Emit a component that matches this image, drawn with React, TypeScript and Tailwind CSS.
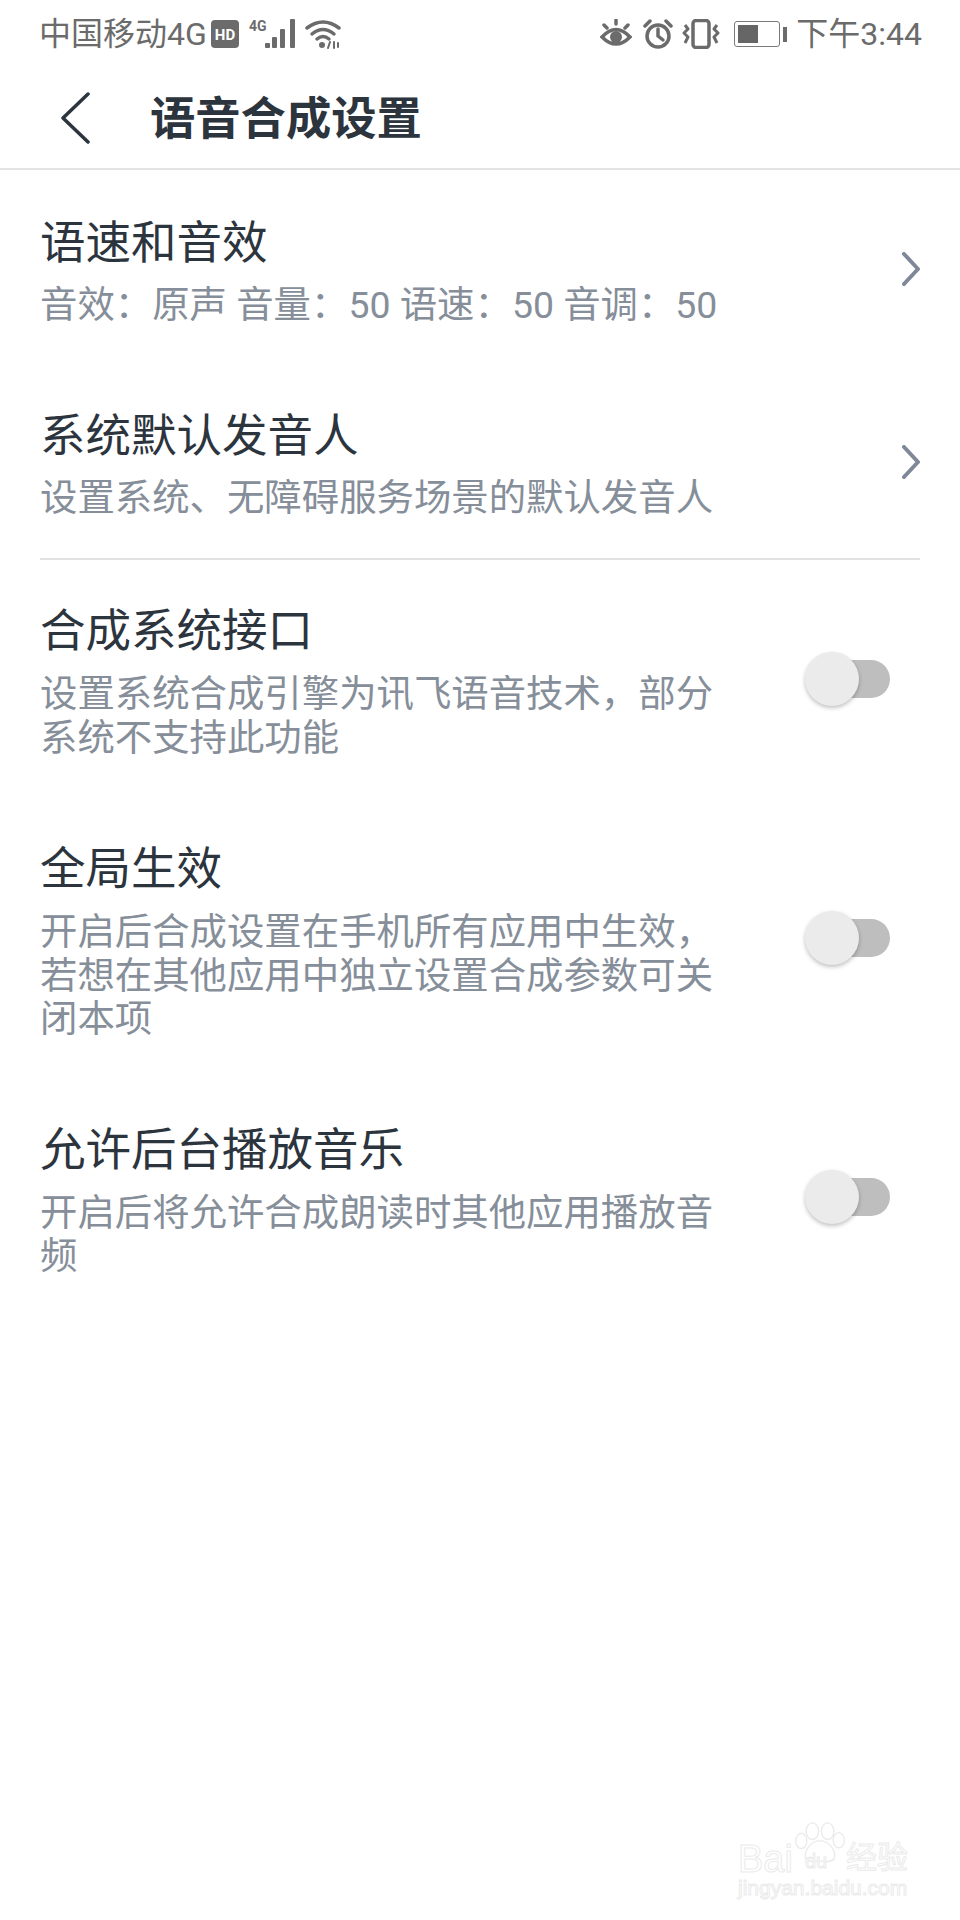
import React from 'react';

const cjk = "font-['Roboto','Noto_Sans_CJK_SC',sans-serif]";

const NavRow = ({ title, sub, className }: { title: string; sub: string; className: string }) => (
  <div className={`flex items-center justify-between pl-[40px] pr-[39px] ${className}`}>
    <div>
      <div className="text-[45.5px] leading-[58px] text-[#2c343e]">{title}</div>
      <div className="text-[37.4px] leading-[44px] mt-[10px] text-[#858e99]">{sub}</div>
    </div>
    <svg className="mb-[5px]" width="20" height="34" viewBox="0 0 20 34" fill="none" stroke="#7f8799" strokeWidth="4" strokeLinecap="round" strokeLinejoin="round">
      <path d="M3 2 L17 17 L3 32" />
    </svg>
  </div>
);

const ToggleRow = ({ title, lines, className }: { title: string; lines: string[]; className: string }) => (
  <div className={`flex items-center justify-between pl-[40px] pr-[70px] ${className}`}>
    <div>
      <div className="text-[45.5px] leading-[58px] text-[#2c343e]">{title}</div>
      <div className="mt-[12px] text-[37.4px] leading-[43.5px] text-[#858e99]">
        {lines.map((l) => (
          <div key={l}>{l}</div>
        ))}
      </div>
    </div>
    <div className="relative mb-[6px] h-[54px] w-[85px] shrink-0">
      <div className="absolute right-0 top-[8px] h-[38px] w-[60px] rounded-full bg-[#bebebe]" />
      <div className="absolute left-0 top-0 h-[54px] w-[54px] rounded-full bg-[#ebebeb] shadow-[0_2px_4px_rgba(0,0,0,0.25)]" />
    </div>
  </div>
);

export default function App() {
  return (
    <div className={`relative h-[1920px] w-[960px] overflow-hidden bg-white ${cjk}`}>
      {/* status bar */}
      <div className="flex h-[62px] items-center justify-between pl-[39px] pr-[38px] pt-[6px] text-[32px] text-[#6b6b6b]">
        <div className="flex items-center">
          <span>中国移动4G</span>
          <svg className="ml-[4px]" width="28" height="28" viewBox="0 0 28 28">
            <rect width="28" height="28" rx="4" fill="#6b6b6b" />
            <text x="14" y="20" textAnchor="middle" fontSize="15" fontWeight="700" fill="#fff" fontFamily="Roboto">HD</text>
          </svg>
          <svg className="ml-[10px]" width="48" height="30" viewBox="0 0 48 30" fill="#6b6b6b">
            <text x="0" y="12" fontSize="14" fontWeight="700" fontFamily="Roboto">4G</text>
            <rect x="16" y="24" width="5" height="5" rx="1" />
            <rect x="23" y="18" width="5" height="11" rx="1" />
            <rect x="31" y="10" width="5" height="19" rx="1" />
            <rect x="41" y="0" width="5" height="29" rx="1" />
          </svg>
          <svg className="ml-[8px]" width="36" height="30" viewBox="0 0 36 30" fill="none" stroke="#6b6b6b" strokeWidth="3.5" strokeLinecap="round">
            <path d="M2 9 Q18 -3 34 9" />
            <path d="M7 15 Q18 6 29 15" />
            <path d="M12 20 Q18 15 24 20" />
            <circle cx="17" cy="26" r="3" fill="#6b6b6b" stroke="none" />
            <path d="M25 23 L23 29 M29 23 L29 29 M33 24 L33 28" strokeWidth="2" />
          </svg>
        </div>
        <div className="flex items-center">
          <svg width="32" height="30" viewBox="0 0 32 30" fill="none" stroke="#6b6b6b" strokeWidth="3.5" strokeLinecap="round">
            <path d="M2 18 Q16 3 30 18 Q16 32 2 18 Z" />
            <circle cx="16" cy="18" r="6" fill="#6b6b6b" stroke="none" />
            <path d="M4 6 L7 9 M16 1 L16 5 M28 6 L25 9" />
          </svg>
          <svg className="ml-[11px]" width="30" height="30" viewBox="0 0 30 30" fill="none" stroke="#6b6b6b" strokeWidth="3.5" strokeLinecap="round">
            <circle cx="15" cy="17" r="11" />
            <path d="M15 10 L15 17 L20 21" />
            <path d="M2 7 L7 2 M28 7 L23 2" />
          </svg>
          <svg className="ml-[9px]" width="38" height="30" viewBox="0 0 38 30" fill="none" stroke="#6b6b6b" strokeWidth="3.5" strokeLinejoin="round">
            <rect x="11" y="1.5" width="16" height="27" rx="3" />
            <path d="M3 6 L6 10 L2 14 L6 18 L3 24 M35 6 L32 10 L36 14 L32 18 L35 24" strokeWidth="3" />
          </svg>
          <div className="ml-[14px] flex items-center">
            <div className="flex h-[26px] w-[46px] items-center rounded-[3px] border border-[#7a7a7a] pl-[3px]">
              <div className="h-[18px] w-[20px] bg-[#666666]" />
            </div>
            <div className="ml-[3px] h-[15px] w-[4px] bg-[#6b6b6b]" />
          </div>
          <span className="ml-[9px]">下午3:44</span>
        </div>
      </div>

      {/* header */}
      <div className="flex h-[108px] items-center border-b-2 border-[#e4e4e4] pt-[8px]">
        <svg className="mb-[2px] ml-[60px]" width="30" height="52" viewBox="0 0 30 52" fill="none" stroke="#2c343e" strokeWidth="3.5" strokeLinecap="round" strokeLinejoin="round">
          <path d="M28 2 L3 26 L28 50" />
        </svg>
        <span className="ml-[60px] mt-[1px] text-[45.3px] font-bold text-[#2c343e]">语音合成设置</span>
      </div>

      <NavRow className="mt-[45px]" title="语速和音效" sub="音效：原声 音量：50 语速：50 音调：50" />
      <NavRow className="mt-[81px]" title="系统默认发音人" sub="设置系统、无障碍服务场景的默认发音人" />
      <div className="mx-[40px] mt-[38px] h-[2px] bg-[#e2e2e2]" />
      <ToggleRow className="mt-[43px]" title="合成系统接口" lines={['设置系统合成引擎为讯飞语音技术，部分', '系统不支持此功能']} />
      <ToggleRow className="mt-[81px]" title="全局生效" lines={['开启后合成设置在手机所有应用中生效，', '若想在其他应用中独立设置合成参数可关', '闭本项']} />
      <ToggleRow className="mt-[80px]" title="允许后台播放音乐" lines={['开启后将允许合成朗读时其他应用播放音', '频']} />

      {/* watermark */}
      <div className="absolute left-[738px] top-[1815px] h-[85px] w-[170px] font-['Liberation_Sans',sans-serif]">
        <svg className="absolute left-[55px] top-[2px]" width="54" height="52" viewBox="0 0 78 62" fill="#fff" stroke="#ebebeb" strokeWidth="2">
          <ellipse cx="28" cy="14" rx="9" ry="12" />
          <ellipse cx="50" cy="14" rx="9" ry="12" />
          <ellipse cx="12" cy="28" rx="8" ry="11" />
          <ellipse cx="66" cy="27" rx="8" ry="11" />
          <path d="M39 28 C52 28 62 42 60 52 C58 60 46 58 39 57 C32 58 20 60 18 52 C16 42 26 28 39 28 Z" />
        </svg>
        <span className="absolute left-0 top-[23px] text-[38px] leading-[42px] text-white [-webkit-text-stroke:1px_#ebebeb]">Bai</span>
        <span className="absolute left-[67px] top-[34px] text-[20px] leading-[24px] text-white [-webkit-text-stroke:1px_#ebebeb]">du</span>
        <span className={`absolute left-[108px] top-[26px] text-[31px] leading-[34px] text-white [-webkit-text-stroke:1px_#ebebeb] ${cjk}`}>经验</span>
        <span className="absolute left-0 top-[61px] text-[21px] leading-[24px] text-white [-webkit-text-stroke:1px_#ebebeb]">jingyan.baidu.com</span>
      </div>
    </div>
  );
}
